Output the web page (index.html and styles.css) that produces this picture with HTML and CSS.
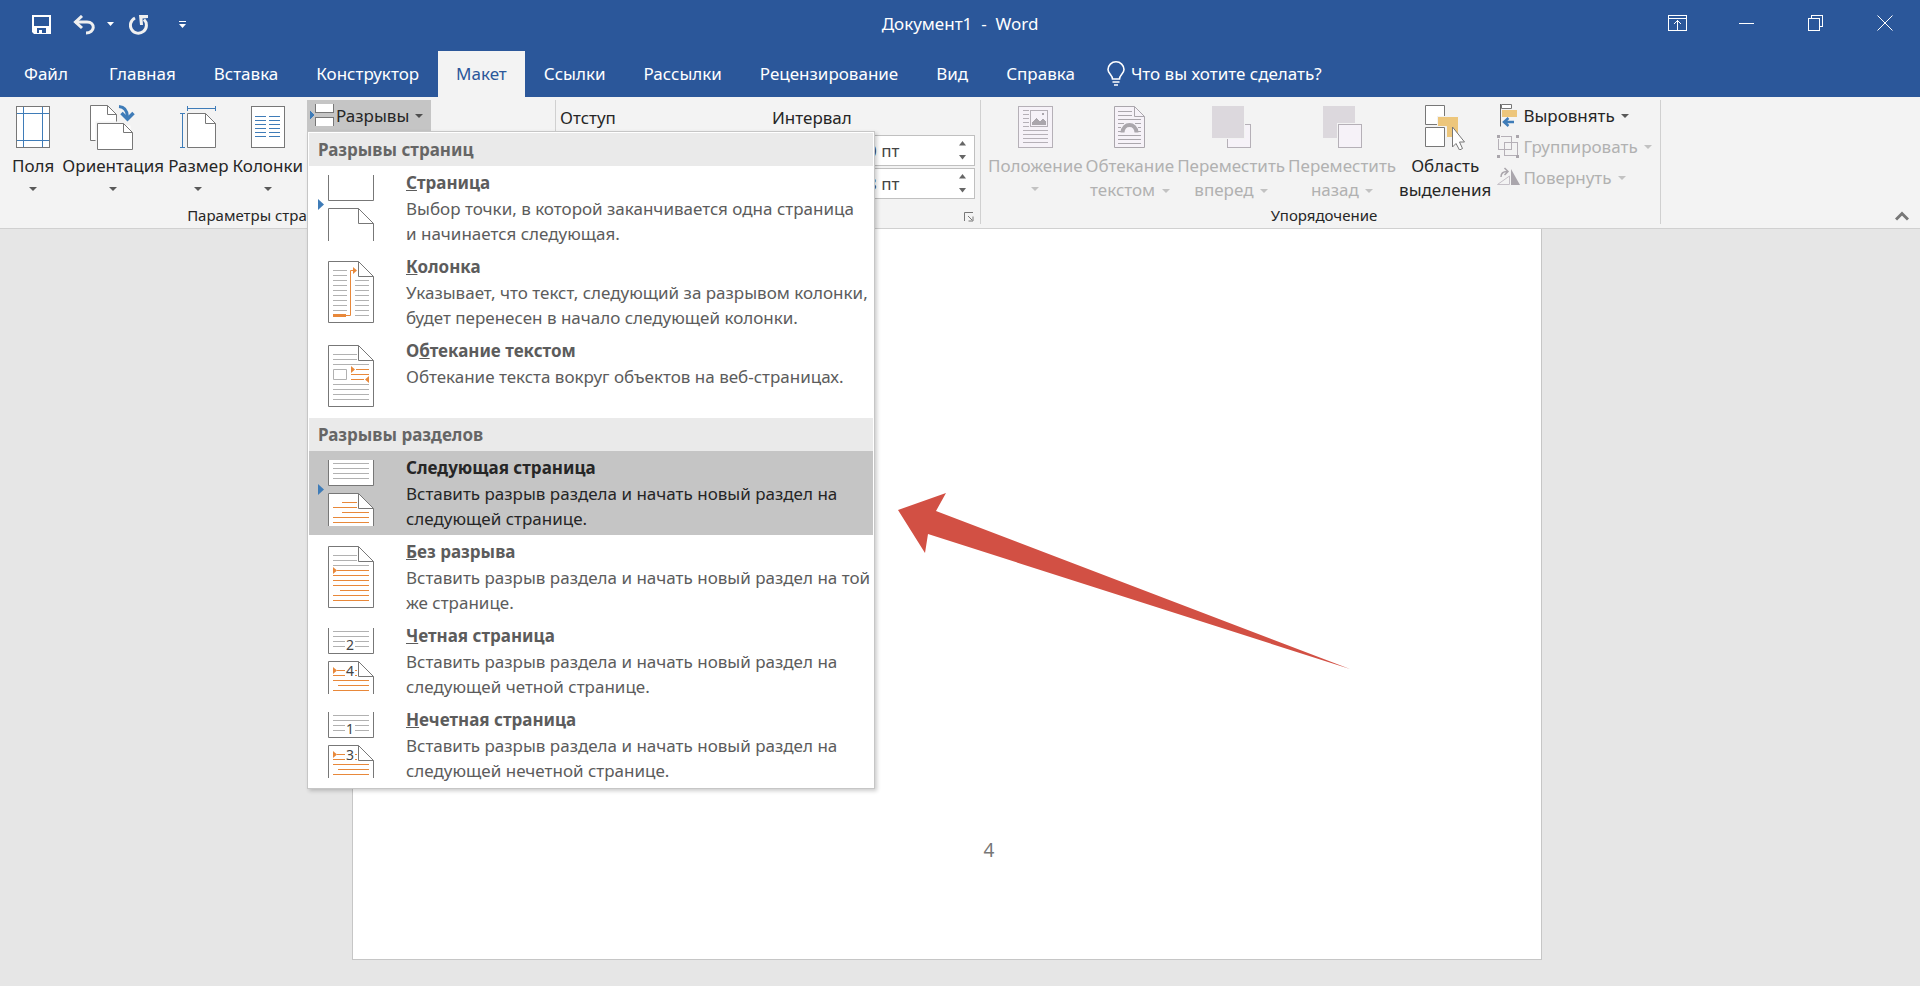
FILE: index.html
```html
<!DOCTYPE html>
<html lang="ru">
<head>
<meta charset="utf-8">
<title>Документ1 - Word</title>
<link rel="stylesheet" href="styles.css">
</head>
<body>
<header class="titlebar">
  <div class="quick">
    <button class="tool" aria-label="Сохранить"><svg width="20" height="20" viewBox="0 0 20 20"><path fill="#fff" fill-rule="evenodd" d="M0 0H19V19H2L0 17ZM2 2V11H17V2ZM5 13V18H7V15H10V18H14V13Z"/></svg></button>
    <button class="tool undo" aria-label="Отменить"><svg width="23" height="20" viewBox="0 0 23 20"><path fill="none" stroke="#f0f0f0" stroke-width="3" d="M2 7H14C23 7 22 18 13 18"/><path fill="none" stroke="#f0f0f0" stroke-width="3" d="M9 1L2.500 7L9 13"/></svg></button>
    <button class="tool more" aria-label="Список отмены"><svg width="8" height="5"><path fill="#fff" d="M0 0H7L3.500 4Z"/></svg></button>
    <button class="tool redo" aria-label="Повторить"><svg width="20" height="20" viewBox="0 0 20 20"><path fill="none" stroke="#f0f0f0" stroke-width="3" d="M6 3A8 8 0 1 0 15 4.500"/><path fill="#f0f0f0" d="M10 0H19V3L13.500 3.500L14 10H11Z"/></svg></button>
    <button class="tool custom" aria-label="Настройка панели быстрого доступа"><svg width="8" height="8"><path fill="#fff" d="M0 0H7V1H0ZM0 3H7L3.500 7Z"/></svg></button>
  </div>
  <h1 class="title">Документ1&nbsp; -&nbsp; Word</h1>
  <div class="window">
    <button class="win" aria-label="Параметры отображения ленты"><svg class="crisp" width="19" height="16"><path fill="none" stroke="#fff" d="M.5.5H18.500V15.500H.5ZM.5 3.500H18.500M9.500 15V6M5.500 9.500L9.500 5.500L13.500 9.500"/></svg></button>
    <button class="win" aria-label="Свернуть"><svg class="crisp" width="15" height="16"><path stroke="#fff" d="M0 8.500H15"/></svg></button>
    <button class="win" aria-label="Свернуть в окно"><svg class="crisp" width="15" height="16"><path fill="none" stroke="#fff" d="M.5 3.500H11.500V15.500H.5ZM3.500 3V.5H14.500V11.500H12"/></svg></button>
    <button class="win" aria-label="Закрыть"><svg width="16" height="16"><path stroke="#fff" d="M.5.5L15.500 15.500M15.500.5L.5 15.500"/></svg></button>
  </div>
</header>
<nav class="tabs">
  <button class="tab file">Файл</button>
  <button class="tab">Главная</button>
  <button class="tab">Вставка</button>
  <button class="tab">Конструктор</button>
  <button class="tab active">Макет</button>
  <button class="tab">Ссылки</button>
  <button class="tab">Рассылки</button>
  <button class="tab">Рецензирование</button>
  <button class="tab">Вид</button>
  <button class="tab">Справка</button>
  <button class="tab tell"><svg width="18" height="26" viewBox="0 0 18 26"><path fill="none" stroke="#fff" stroke-width="1.600" d="M5.500 18C5.500 14 1 12.500 1 8.500A8 7.700 0 0 1 17 8.500C17 12.500 12.500 14 12.500 18ZM5.500 21H12.500M7 24H11"/></svg>Что вы хотите сделать?</button>
</nav>
<section class="ribbon" aria-label="Макет">
  <div class="group page-setup">
    <div class="controls">
      <button class="big margins"><svg class="crisp" width="34" height="46"><path fill="#fff" stroke="#777" d="M.5 2.500H33.500V43.500H.5Z"/><path stroke="#3f7cb8" d="M7.500 3V43M26.500 3V43M1 9.500H33M1 36.500H33"/></svg><span>Поля</span><i class="caret"></i></button>
      <button class="big"><svg width="46" height="46"><path fill="#fff" stroke="#777" d="M8 36.500H.5V1.500H17.500L26.500 10.500V36.500ZM26.500 10.500H17.500V1.500"/><path fill="#fff" stroke="#f3f3f3" stroke-width="4" d="M7.500 19.500H42.500V45H7.500Z"/><path fill="#fff" stroke="#777" d="M7.500 19.500H33.500L42.500 28.500V45.500H7.500ZM42.500 28.500H33.500V19.500"/><path fill="none" stroke="#3f7cb8" stroke-width="3" d="M29 2.500Q37 3 37.500 13"/><path fill="none" stroke="#3f7cb8" stroke-width="3.500" d="M31.500 9L37.500 15L43.500 9"/></svg><span>Ориентация</span><i class="caret"></i></button>
      <button class="big"><svg width="37" height="46"><path fill="#fff" stroke="#777" d="M7.500 9.500H25.500L35.500 19.500V43.500H7.500ZM35.500 19.500H25.500V9.500"/><path fill="none" stroke="#3f7cb8" d="M2.500 9.500V43.500M0 9.500H5M0 43.500H5M7.500 4.500H35.500M7.500 2V7M35.500 2V7"/></svg><span>Размер</span><i class="caret"></i></button>
      <button class="big"><svg class="crisp" width="34" height="46"><path fill="#fff" stroke="#777" d="M.5 2.500H33.500V43.500H.5Z"/><path stroke="#3f7cb8" d="M4 12.500H15M4 16.500H15M4 20.500H15M4 24.500H15M4 28.500H15M4 32.500H15M18 12.500H29M18 16.500H29M18 20.500H29M18 24.500H29M18 28.500H29M18 32.500H29"/></svg><span>Колонки</span><i class="caret"></i></button>
      <div class="breaks">
        <button class="small pressed" aria-expanded="true"><svg class="crisp" width="27" height="23"><path fill="#fff" d="M7 0H25V8H7ZM7 14H25V22H7Z"/><path fill="none" stroke="#777" d="M6.500 0V8.500H24.500V0M6.500 22V13.500H24.500V22"/><path fill="#3f7cb8" d="M1 6L5.500 11L1 15Z"/></svg>Разрывы<i class="caret"></i></button>
        <div class="menu" role="menu">
          <h2 class="menu-head">Разрывы страниц</h2>
          <button class="item" role="menuitem">
            <svg width="97" height="84"><path fill="#fff" stroke="#777" d="M19.500 9V34.500H64.500V9M19.500 75V42.500H49.500L64.500 57.500V75M64.500 57.500H49.500V42.500"/><path fill="#3f7cb8" d="M9 33L15 38.500L9 44Z"/></svg>
            <span class="text"><b><u>С</u>траница</b><span>Выбор точки, в которой заканчивается одна страница<br>и начинается следующая.</span></span>
          </button>
          <button class="item" role="menuitem">
            <svg width="97" height="84"><path fill="#fff" stroke="#777" d="M19.500 11.500H49.500L64.500 26.500V72.500H19.500ZM64.500 26.500H49.500V11.500"/><path stroke="#b1b1b1" d="M24 20.500H38M24 25.500H38M24 30.500H38M24 35.500H38M24 40.500H38M24 45.500H38M24 50.500H38M24 55.500H38M24 60.500H38M46 30.500H60M46 35.500H60M46 40.500H60M46 45.500H60M46 50.500H60M46 55.500H60M46 60.500H60M46 65.500H60"/><path fill="none" stroke="#e8883a" d="M37 65.500H41.500V20.500H45"/><path fill="#e8883a" d="M24 64H37V67H24ZM44 17L48 20.500L44 24Z"/></svg>
            <span class="text"><b><u>К</u>олонка</b><span>Указывает, что текст, следующий за разрывом колонки,<br>будет перенесен в начало следующей колонки.</span></span>
          </button>
          <button class="item" role="menuitem">
            <svg width="97" height="84"><path fill="#fff" stroke="#777" d="M19.500 11.500H49.500L64.500 26.500V72.500H19.500ZM64.500 26.500H49.500V11.500"/><path fill="none" stroke="#b1b1b1" d="M24 20.500H48M24 25.500H48M24 30.500H60M24.500 35.500H37.500V45.500H24.500ZM24 50.500H60M24 55.500H60M24 60.500H60M24 65.500H60"/><path stroke="#e8883a" d="M47 35.500H60M42 40.500H60M42 45.500H55"/><path fill="#e8883a" d="M42 32L46 35.500L42 39ZM60 42L56 45.500L60 49Z"/></svg>
            <span class="text"><b>О<u>б</u>текание текстом</b><span>Обтекание текста вокруг объектов на веб-страницах.</span></span>
          </button>
          <h2 class="menu-head">Разрывы разделов</h2>
          <button class="item selected" role="menuitem">
            <svg width="97" height="84"><path fill="#fff" stroke="#777" d="M19.500 9V34.500H64.500V9M19.500 75V42.500H49.500L64.500 57.500V75M64.500 57.500H49.500V42.500"/><path stroke="#b1b1b1" d="M24 12.500H60M24 17.500H60M24 22.500H60M24 27.500H60"/><path stroke="#e8883a" d="M33 51.500H48M24 56.500H48M33 61.500H60M24 66.500H60M24 71.500H60"/><path fill="#3f7cb8" d="M9 33L15 38.500L9 44Z"/></svg>
            <span class="text"><b>Следующая страница</b><span>Вставить разрыв раздела и начать новый раздел на<br>следующей странице.</span></span>
          </button>
          <button class="item" role="menuitem">
            <svg width="97" height="84"><path fill="#fff" stroke="#777" d="M19.500 11.500H49.500L64.500 26.500V72.500H19.500ZM64.500 26.500H49.500V11.500"/><path stroke="#b1b1b1" d="M24 20.500H48M24 25.500H48M24 30.500H60"/><path stroke="#e8883a" d="M28 35.500H60M24 40.500H60M24 45.500H60M24 50.500H60M31 55.500H60M24 60.500H60M24 65.500H60"/><path fill="#e8883a" d="M24 32L28 35.500L24 39Z"/></svg>
            <span class="text"><b><u>Б</u>ез разрыва</b><span>Вставить разрыв раздела и начать новый раздел на той<br>же странице.</span></span>
          </button>
          <button class="item" role="menuitem">
            <svg width="97" height="84"><path fill="#fff" stroke="#777" d="M19.500 9V34.500H64.500V9M19.500 75V42.500H49.500L64.500 57.500V75M64.500 57.500H49.500V42.500"/><path stroke="#b1b1b1" d="M24 12.500H60M24 17.500H60M24 22.500H36M46 22.500H60M24 27.500H36M46 27.500H60"/><path stroke="#e8883a" d="M28 51.500H36M46 51.500H48M24 56.500H36M46 56.500H48M24 61.500H60M29 66.500H60M24 71.500H60"/><path fill="#e8883a" d="M24 48L28 51.500L24 55Z"/><text class="num" x="41" y="31">2</text><text class="num" x="41" y="57">4</text></svg>
            <span class="text"><b><u>Ч</u>етная страница</b><span>Вставить разрыв раздела и начать новый раздел на<br>следующей четной странице.</span></span>
          </button>
          <button class="item" role="menuitem">
            <svg width="97" height="84"><path fill="#fff" stroke="#777" d="M19.500 9V34.500H64.500V9M19.500 75V42.500H49.500L64.500 57.500V75M64.500 57.500H49.500V42.500"/><path stroke="#b1b1b1" d="M24 12.500H60M24 17.500H60M24 22.500H36M46 22.500H60M24 27.500H36M46 27.500H60"/><path stroke="#e8883a" d="M28 51.500H36M46 51.500H48M24 56.500H36M46 56.500H48M24 61.500H60M29 66.500H60M24 71.500H60"/><path fill="#e8883a" d="M24 48L28 51.500L24 55Z"/><text class="num" x="41" y="31">1</text><text class="num" x="41" y="57">3</text></svg>
            <span class="text"><b><u>Н</u>ечетная страница</b><span>Вставить разрыв раздела и начать новый раздел на<br>следующей нечетной странице.</span></span>
          </button>
        </div>
      </div>
    </div>
    <div class="group-name">Параметры страницы</div>
  </div>
  <div class="group paragraph">
    <div class="fields">
      <div class="field-head">Отступ</div>
      <div class="interval">
        <div class="field-head">Интервал</div>
        <div class="spin"><input type="text" value="0 пт" aria-label="Интервал до"><span class="steps"><button aria-label="Больше"><svg width="8" height="5"><path fill="#666" d="M0 4.500H7L3.500 0Z"/></svg></button><button aria-label="Меньше"><svg width="8" height="5"><path fill="#666" d="M0 0H7L3.500 4.500Z"/></svg></button></span></div>
        <div class="spin"><input type="text" value="8 пт" aria-label="Интервал после"><span class="steps"><button aria-label="Больше"><svg width="8" height="5"><path fill="#666" d="M0 4.500H7L3.500 0Z"/></svg></button><button aria-label="Меньше"><svg width="8" height="5"><path fill="#666" d="M0 0H7L3.500 4.500Z"/></svg></button></span></div>
      </div>
    </div>
    <button class="launcher" aria-label="Параметры абзаца"><svg width="10" height="10"><path fill="none" stroke="#777" d="M.5 9V.5H9M4 4L8 8M9 4.500V9H4.500"/></svg></button>
  </div>
  <div class="group arrange">
    <div class="controls">
      <button class="big" disabled><svg class="crisp" width="35" height="46"><path fill="#f6f2f8" stroke="#b5b0b7" d="M.5 2.500H34.500V43.500H.5ZM12.500 6.500H29.500V22.500H12.500Z"/><path stroke="#b5b0b7" d="M5 6.500H11M5 10.500H11M5 14.500H11M5 18.500H11M5 22.500H11M5 26.500H30M5 30.500H30M5 34.500H30M5 38.500H30"/><path fill="#aaa6ac" d="M14 21V18L18 14L22 17L25 14L28 18V21ZM24 9H26V11H24Z"/></svg><span>Положение</span><i class="caret"></i></button>
      <button class="big" disabled><svg width="31" height="46"><path fill="#f6f2f8" stroke="#aaa6ac" d="M.5 2.500H20.500L30.500 12.500V43.500H.5ZM30.500 12.500H20.500V2.500"/><path stroke="#aaa6ac" d="M4 7.500H18M4 11.500H18M4 15.500H27M4 19.500H10M21 19.500H27M4 23.500H7M24 23.500H27M4 27.500H7M24 27.500H27M4 31.500H27M4 35.500H27M4 39.500H27"/><path fill="none" stroke="#aaa6ac" stroke-width="4" d="M8.500 28.500C9 18.500 22 18.500 22.500 28.500"/></svg><span>Обтекание<br>текстом <i class="caret"></i></span></button>
      <button class="big" disabled><svg class="crisp" width="39" height="46"><path fill="#f6f2f8" stroke="#b5b0b7" d="M15.500 20.500H38.500V43.500H15.500Z"/><path fill="#dcd8dd" stroke="#f3f3f3" d="M-.5 1.500H32.500V34.500H-.5Z"/></svg><span>Переместить<br>вперед <i class="caret"></i></span></button>
      <button class="big" disabled><svg class="crisp" width="39" height="46"><path fill="#dcd8dd" d="M0 2H32V34H0Z"/><path fill="#f6f2f8" stroke="#f3f3f3" stroke-width="3" d="M15.500 20.500H38.500V43.500H15.500Z"/><path fill="#f6f2f8" stroke="#b5b0b7" d="M15.500 20.500H38.500V43.500H15.500Z"/></svg><span>Переместить<br>назад <i class="caret"></i></span></button>
      <button class="big"><svg width="40" height="46"><path fill="#fff" stroke="#777" d="M.5 1.500H19.500V20.500H.5ZM.5 23.500H19.500V42.500H.5Z"/><path fill="#edc67b" stroke="#f3f3f3" d="M12.500 12.500H33.500V33.500H21.500V22.500H12.500Z"/><path fill="#fff" stroke="#777" d="M27.500 23V43L31 39.500L34.500 46L37.500 44.500L34.500 38H39.500Z"/></svg><span>Область<br>выделения</span></button>
      <div class="stack">
        <button class="small"><svg width="27" height="23"><path fill="none" stroke="#666" d="M4.500 0V22.500"/><path fill="#fff" stroke="#777" d="M5.500.5H15.500V4.500H5.500Z"/><path fill="#edc67b" d="M6 6H21V13H6Z"/><path fill="none" stroke="#3f7cb8" stroke-width="2.500" d="M18 18H8M12.500 14L8 18L12.500 22"/></svg>Выровнять<i class="caret"></i></button>
        <button class="small" disabled><svg class="crisp" width="27" height="23"><path fill="none" stroke="#b5b0b7" d="M4.500 1.500H15.500V14.500H2.500V4M8.500 7.500H21.500V20.500H8.500Z"/><path fill="#aaa6ac" d="M1 0H4V3H1ZM20 0H23V3H20ZM1 20H4V23H1ZM20 20H23V23H20Z"/></svg>Группировать<i class="caret"></i></button>
        <button class="small" disabled><svg width="27" height="23"><path fill="none" stroke="#c5c0c7" d="M1.500 18.500H13.500V10Z"/><path fill="#aaa6ac" d="M15 3V19H24Z"/><path fill="none" stroke="#aaa6ac" stroke-width="1.500" d="M5 11Q5 5.500 11 5.500M8.500 2L12 5.500L8.500 9"/></svg>Повернуть<i class="caret"></i></button>
      </div>
    </div>
    <div class="group-name">Упорядочение</div>
  </div>
  <button class="collapse" aria-label="Свернуть ленту"><svg width="14" height="10"><path fill="none" stroke="#777" stroke-width="3" d="M1 8.500L7 2.500L13 8.500"/></svg></button>
</section>
<main class="workspace">
  <article class="sheet">
    <svg class="pointer" width="452" height="176"><path fill="#d25044" d="M0 17L48 0L38 18L452 176L30 41L27 60Z"/></svg>
    <span class="page-number">4</span>
  </article>
</main>
</body>
</html>
```
FILE: styles.css
```css
* { box-sizing: border-box; }
body {
  margin: 0;
  min-height: 100vh;
  display: flex;
  flex-direction: column;
  background: #e6e6e6;
  color: #262626;
  font: 17px/24px "Noto Sans", "Open Sans", sans-serif;
}
button {
  border: 0;
  padding: 0;
  background: none;
  color: inherit;
  font: inherit;
}
svg { display: block; flex: none; }
.crisp { shape-rendering: crispEdges; }

.titlebar {
  display: grid;
  grid-template-columns: 1fr auto 1fr;
  height: 51px;
  background: #2b579a;
  color: #fff;
}
.quick { display: flex; align-items: center; padding: 0 0 2px 32px; }
.undo { margin-left: 21px; }
.more { margin-left: 11px; }
.redo { margin-left: 14px; }
.custom { margin-left: 30px; }
.title { margin: 0; font-size: 17px; font-weight: 400; line-height: 48px; }
.window { display: flex; justify-content: flex-end; padding-right: 1px; }
.win { width: 69px; height: 45px; display: flex; align-items: center; justify-content: center; }

.tabs { display: flex; height: 46px; background: #2b579a; color: #fff; }
.tab { padding: 0 19px; white-space: nowrap; }
.file { padding: 0 22px 0 24px; }
.active { padding: 0 18px; background: #f3f3f3; color: #2b579a; }
.tell { display: flex; align-items: center; gap: 6px; padding-left: 13px; }

.ribbon {
  display: flex;
  height: 132px;
  padding-top: 3px;
  background: #f3f3f3;
  border-bottom: 1px solid #d0d0d0;
}
.group {
  display: flex;
  flex-direction: column;
  justify-content: space-between;
  margin-bottom: 4px;
  border-right: 1px solid #d0d0d0;
}
.page-setup { width: 556px; }
.page-setup .controls { padding-left: 12px; gap: 4px; }
.paragraph { width: 425px; }
.arrange { width: 680px; padding-left: 7px; }
.controls { display: flex; align-items: flex-start; gap: 3px; }
.big { display: flex; flex-direction: column; align-items: center; padding-top: 4px; white-space: nowrap; }
.margins { margin-right: 4px; }
.big > span { padding-top: 4px; }
.big > .caret { margin-top: 9px; }
.caret {
  display: inline-block;
  border: 4px solid transparent;
  border-top-color: currentColor;
  border-bottom: 0;
  opacity: .75;
  vertical-align: middle;
}
.big span .caret { margin-left: 2px; }
button:disabled { color: #b1b1b1; }
.small { display: flex; align-items: center; height: 31px; padding: 0 8px 0 2px; white-space: nowrap; }
.small .caret { margin-left: 6px; }
.pressed { background: #c5c5c5; }
.group-name { font-size: 15px; line-height: 18px; text-align: center; }
.page-setup .group-name { padding-right: 22px; }
.breaks { position: relative; }

.menu {
  position: absolute;
  z-index: 2;
  left: 0;
  top: 31px;
  width: 568px;
  padding: 1px;
  background: #fff;
  border: 1px solid #c6c6c6;
  box-shadow: 2px 2px 4px rgba(0, 0, 0, .2);
}
.menu-head {
  margin: 0;
  padding: 0 9px;
  background: #eaeaea;
  color: #666;
  font-size: 17px;
  line-height: 33px;
}
.item {
  display: flex;
  width: 100%;
  height: 84px;
  color: #5c5c5c;
  text-align: left;
}
.selected { background: #c5c5c5; color: #262626; }
.text { display: flex; flex-direction: column; padding-top: 3px; line-height: 25px; white-space: nowrap; }
.text b { line-height: 27px; }
.num { font-size: 14px; text-anchor: middle; fill: #444; }

.fields { display: flex; justify-content: space-between; padding: 6px 5px 0 4px; }
.interval { width: 203px; display: flex; flex-direction: column; align-items: flex-end; gap: 2px; }
.interval .field-head { align-self: flex-start; padding-bottom: 3px; }
.spin { display: flex; width: 118px; height: 31px; background: #fff; border: 1px solid #c0c0c0; }
.spin input {
  width: 0;
  flex: 1;
  border: 0;
  padding: 0 9px;
  background: none;
  color: #444;
  font: inherit;
}
.steps { display: flex; flex-direction: column; justify-content: space-around; padding: 0 7px; }
.launcher { align-self: flex-end; margin: 0 6px 2px 0; }
.collapse { margin: auto 11px 7px auto; }

.workspace { flex: 1; display: flex; justify-content: center; padding: 0 26px 26px 0; }
.sheet {
  position: relative;
  width: 1190px;
  display: flex;
  align-items: flex-end;
  justify-content: center;
  padding: 0 0 97px 84px;
  background: #fff;
  border: 1px solid #c6c6c6;
  border-top: 0;
}
.pointer { position: absolute; left: 545px; top: 264px; }
.page-number { color: #777; font-size: 19px; }
```
